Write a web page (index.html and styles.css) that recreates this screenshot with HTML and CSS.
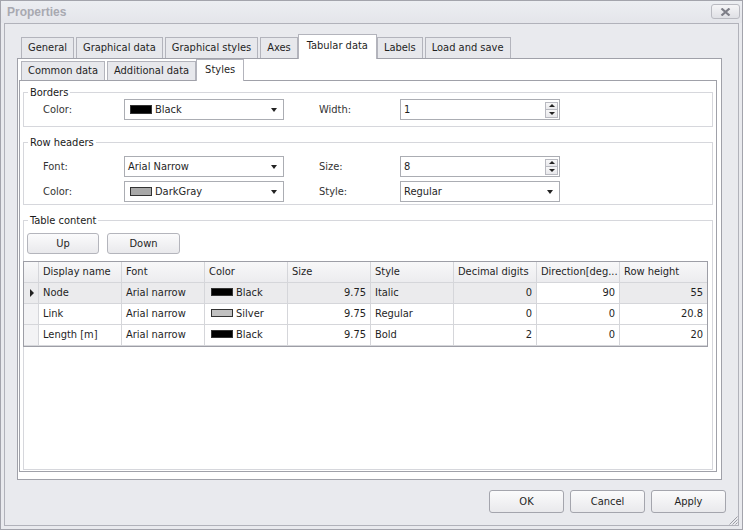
FILE: index.html
```html
<!DOCTYPE html>
<html lang="en">
<head>
    <meta charset="UTF-8">
    <title>Properties</title>
    <link rel="stylesheet" href="styles.css">
</head>
<body>
<div class="window">
    <div class="titlebar">
        <span class="title">Properties</span>
        <div class="close-btn">
            <svg width="11" height="8" viewBox="0 0 11 8"><path d="M1.5 0.5 L9.5 7.5 M9.5 0.5 L1.5 7.5" stroke="#7e7f88" stroke-width="2.2"/></svg>
        </div>
    </div>

    <div class="client">
        <div class="tabs outer-tabs">
            <div class="tab">General</div>
            <div class="tab">Graphical data</div>
            <div class="tab">Graphical styles</div>
            <div class="tab">Axes</div>
            <div class="tab active">Tabular data</div>
            <div class="tab">Labels</div>
            <div class="tab">Load and save</div>
        </div>

        <div class="outer-page">
            <div class="tabs inner-tabs">
                <div class="tab">Common data</div>
                <div class="tab">Additional data</div>
                <div class="tab active">Styles</div>
            </div>

            <div class="inner-page">
                <fieldset class="group">
                    <legend>Borders</legend>
                    <div class="group-body">
                        <div class="row">
                            <div class="pair">
                                <span class="label">Color:</span>
                                <div class="combo"><span class="swatch black"></span><span class="value">Black</span></div>
                            </div>
                            <div class="pair">
                                <span class="label">Width:</span>
                                <div class="spin"><span class="value">1</span><div class="spin-btns"><div class="spin-btn up"></div><div class="spin-btn down"></div></div></div>
                            </div>
                        </div>
                    </div>
                </fieldset>

                <fieldset class="group">
                    <legend>Row headers</legend>
                    <div class="group-body rows2">
                        <div class="row">
                            <div class="pair">
                                <span class="label">Font:</span>
                                <div class="combo text"><span class="value">Arial Narrow</span></div>
                            </div>
                            <div class="pair">
                                <span class="label">Size:</span>
                                <div class="spin"><span class="value">8</span><div class="spin-btns"><div class="spin-btn up"></div><div class="spin-btn down"></div></div></div>
                            </div>
                        </div>
                        <div class="row">
                            <div class="pair">
                                <span class="label">Color:</span>
                                <div class="combo"><span class="swatch darkgray"></span><span class="value">DarkGray</span></div>
                            </div>
                            <div class="pair">
                                <span class="label">Style:</span>
                                <div class="combo text"><span class="value">Regular</span></div>
                            </div>
                        </div>
                    </div>
                </fieldset>

                <fieldset class="group table-group">
                    <legend>Table content</legend>
                    <div class="group-body table-body">
                        <div class="move-btns">
                            <div class="btn up-btn">Up</div>
                            <div class="btn down-btn">Down</div>
                        </div>
                        <div class="grid">
                            <div class="cell head ind"></div>
                            <div class="cell head">Display name</div>
                            <div class="cell head">Font</div>
                            <div class="cell head">Color</div>
                            <div class="cell head">Size</div>
                            <div class="cell head">Style</div>
                            <div class="cell head">Decimal digits</div>
                            <div class="cell head">Direction[deg...</div>
                            <div class="cell head last">Row height</div>

                            <div class="cell ind sel"><span class="pointer"></span></div>
                            <div class="cell sel">Node</div>
                            <div class="cell sel">Arial narrow</div>
                            <div class="cell sel"><span class="swatch black small"></span>Black</div>
                            <div class="cell sel num">9.75</div>
                            <div class="cell sel">Italic</div>
                            <div class="cell sel num">0</div>
                            <div class="cell num">90</div>
                            <div class="cell sel num last">55</div>

                            <div class="cell ind"></div>
                            <div class="cell">Link</div>
                            <div class="cell">Arial narrow</div>
                            <div class="cell"><span class="swatch silver small"></span>Silver</div>
                            <div class="cell num">9.75</div>
                            <div class="cell">Regular</div>
                            <div class="cell num">0</div>
                            <div class="cell num">0</div>
                            <div class="cell num last">20.8</div>

                            <div class="cell ind"></div>
                            <div class="cell">Length [m]</div>
                            <div class="cell">Arial narrow</div>
                            <div class="cell"><span class="swatch black small"></span>Black</div>
                            <div class="cell num">9.75</div>
                            <div class="cell">Bold</div>
                            <div class="cell num">2</div>
                            <div class="cell num">0</div>
                            <div class="cell num last">20</div>
                        </div>
                    </div>
                </fieldset>
            </div>
        </div>

        <div class="dialog-btns">
            <div class="btn">OK</div>
            <div class="btn">Cancel</div>
            <div class="btn">Apply</div>
        </div>

        <svg class="grip" width="11" height="11" viewBox="0 0 11 11">
            <path d="M10.5 2.5 L2.5 10.5 M10.5 5.5 L5.5 10.5 M10.5 8.5 L8.5 10.5" stroke="#9c9da5" stroke-width="1"/>
        </svg>
    </div>
</div>
</body>
</html>
```

FILE: styles.css
```css
* {
    box-sizing: border-box;
}
body {
    margin: 0;
    font-family: "DejaVu Sans Condensed", "Liberation Sans", sans-serif;
    font-size: 11px;
    color: #1f1f1f;
}
.window {
    width: 743px;
    height: 530px;
    border: 1px solid #a3a4ac;
    background: #e9eaee;
    display: flex;
    flex-direction: column;
}

/* title bar */
.titlebar {
    height: 22px;
    flex: none;
    display: flex;
    align-items: center;
    justify-content: space-between;
    padding: 0 2px 0 6px;
    background: linear-gradient(#eceef2, #e4e5ea);
}
.title {
    font-family: "Liberation Sans", sans-serif;
    font-weight: bold;
    font-size: 12px;
    color: #a8a9b1;
}
.close-btn {
    width: 29px;
    height: 15px;
    margin-top: -1px;
    border: 1px solid #b9bac1;
    border-radius: 3px;
    background: linear-gradient(#f5f5f7, #dfe0e5);
    display: flex;
    align-items: center;
    justify-content: center;
}

/* client area */
.client {
    flex: 1;
    margin: 0 3px 3px;
    border: 1px solid #b1b2ba;
    padding: 10px 12px 0 12px;
    display: flex;
    flex-direction: column;
    position: relative;
}

/* tabs */
.tabs {
    display: flex;
    align-items: flex-end;
    flex: none;
}
.outer-tabs {
    height: 24px;
    padding-left: 4px;
}
.inner-tabs {
    height: 21px;
    padding-left: 3px;
}
.tab {
    height: 21px;
    line-height: 19px;
    padding: 0 6px;
    margin-right: 2px;
    border: 1px solid #b3b4bc;
    border-bottom: none;
    background: #e7e8ec;
    white-space: nowrap;
}
.inner-tabs .tab {
    height: 19px;
    line-height: 18px;
    padding: 0 6px;
}
.tab.active {
    height: 25px;
    line-height: 22px;
    margin: 0 0 -1px -2px;
    padding: 0 8px;
    background: #fff;
    position: relative;
}
.inner-tabs .tab.active {
    height: 22px;
    line-height: 20px;
    padding: 0 8px;
}

/* pages */
.outer-page {
    flex: none;
    height: 422px;
    margin-right: 4px;
    border: 1px solid #a0a1a9;
    background: #fff;
    padding: 0 4px 7px 0;
    display: flex;
    flex-direction: column;
}
.inner-page {
    flex: 1;
    margin-left: 1px;
    border: 1px solid #a0a1a9;
    padding: 5px 3px 1px 3px;
    display: flex;
    flex-direction: column;
}

/* group boxes */
.group {
    border: 1px solid #d6d7dc;
    margin: 0;
    padding: 0;
    min-width: 0;
}
.group + .group {
    margin-top: 9px;
}
.group legend {
    margin-left: 4px;
    padding: 0 2px;
    line-height: 13px;
    color: #1a1a1a;
}
.group-body {
    padding: 0 0 6px 19px;
}
.group-body.rows2 {
    padding-top: 7px;
    padding-bottom: 2px;
    display: flex;
    flex-direction: column;
    gap: 4px;
}
.row {
    display: flex;
    height: 21px;
}
.pair {
    display: flex;
    align-items: center;
}
.pair + .pair {
    margin-left: 35px;
}
.label {
    width: 81px;
    color: #333;
}

/* combo boxes and spin edits */
.combo,
.spin {
    width: 160px;
    height: 21px;
    border: 1px solid #abadb3;
    background: #fff;
    display: flex;
    align-items: center;
    padding: 0 5px 0 5px;
}
.combo.text,
.spin {
    padding-left: 3px;
}
.spin {
    padding-right: 1px;
}
.value {
    flex: 1;
    white-space: nowrap;
}
.combo::after {
    content: "";
    border-left: 3px solid transparent;
    border-right: 3px solid transparent;
    border-top: 4px solid #222;
    margin-right: 1px;
}
.swatch {
    width: 22px;
    height: 9px;
    margin-right: 3px;
    border: 1px solid #333;
    display: inline-block;
    flex: none;
}
.swatch.black { background: #000; }
.swatch.darkgray { background: #a9a9a9; }
.swatch.silver { background: #c0c0c0; }
.swatch.small {
    height: 8px;
    margin-left: 2px;
}
.spin-btns {
    width: 13px;
    height: 16px;
    display: flex;
    flex-direction: column;
}
.spin-btn {
    flex: 1;
    border: 1px solid #b8b9c0;
    background: linear-gradient(#f7f7f8, #e8e8eb);
    display: flex;
    align-items: center;
    justify-content: center;
}
.spin-btn.down {
    border-top: none;
}
.spin-btn.up::after {
    content: "";
    border-left: 3px solid transparent;
    border-right: 3px solid transparent;
    border-bottom: 3px solid #222;
}
.spin-btn.down::after {
    content: "";
    border-left: 3px solid transparent;
    border-right: 3px solid transparent;
    border-top: 3px solid #222;
}

/* buttons */
.btn {
    height: 21px;
    line-height: 19px;
    text-align: center;
    border: 1px solid #b4b5bc;
    border-radius: 3px;
    background: linear-gradient(#fbfbfc, #e9e9ec);
}
.move-btns {
    display: flex;
    gap: 8px;
    margin: 6px 0 0 3px;
}
.up-btn { width: 72px; }
.down-btn { width: 73px; }

/* table content */
.table-group {
    flex: 1;
    display: flex;
    flex-direction: column;
}
.table-body {
    flex: 1;
    display: flex;
    flex-direction: column;
    padding: 0;
}
.grid {
    flex: 1;
    margin: 7px 4px 4px -1px;
    border: 1px solid #9d9ea6;
    background: #fff;
    display: grid;
    grid-template-columns: 15px repeat(7, 83px) 1fr;
    grid-auto-rows: 21px;
    align-content: start;
}
.cell {
    border-right: 1px solid #d5d6da;
    border-bottom: 1px solid #d5d6da;
    padding: 0 4px;
    line-height: 20px;
    white-space: nowrap;
    overflow: hidden;
}
.cell.last {
    border-right: none;
}
.cell.head {
    background: linear-gradient(#f8f8f9, #ececef);
}
.cell.ind {
    background: #f3f3f5;
    padding: 0;
    display: flex;
    align-items: center;
    justify-content: center;
}
.cell.head.ind {
    background: linear-gradient(#f8f8f9, #ececef);
}
.cell.sel {
    background: #ebebed;
}
.cell.num {
    text-align: right;
}
.pointer {
    border-top: 4px solid transparent;
    border-bottom: 4px solid transparent;
    border-left: 4px solid #222;
    margin-left: 1px;
}

/* dialog buttons */
.dialog-btns {
    display: flex;
    justify-content: flex-end;
    gap: 6px;
    margin-top: 10px;
}
.dialog-btns .btn {
    width: 75px;
    height: 23px;
    line-height: 21px;
    border-color: #a4a5ad;
}
.grip {
    position: absolute;
    right: 0;
    bottom: 0;
}
```
